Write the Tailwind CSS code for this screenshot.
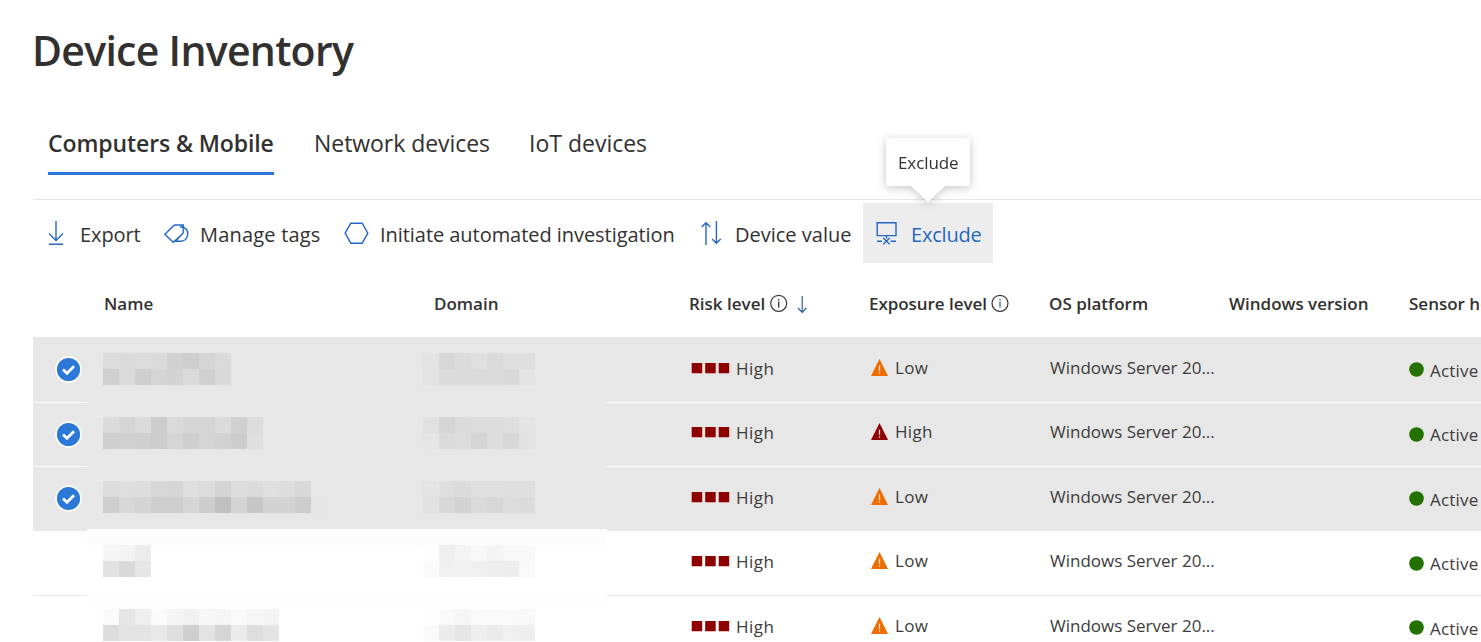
<!DOCTYPE html>
<html lang="en">
<head>
<meta charset="utf-8">
<title>Device Inventory</title>
<script src="https://cdn.jsdelivr.net/npm/@tailwindcss/browser@4"></script>
</head>
<body class="bg-white font-['Open_Sans','Noto_Sans',sans-serif] text-[#323130]">
<div class="relative h-[642px] w-full overflow-hidden whitespace-nowrap pl-[33px]">

  <h1 class="-ml-px pt-5 text-[41px] leading-[60px] font-semibold tracking-[-0.72px]">Device Inventory</h1>

  <nav class="mt-[45px] flex h-[75px] items-start border-b border-[#e6e6e6] pl-[15px] text-[23px] leading-9">
    <a class="w-[226px] border-b-[3px] border-[#2b78d8] pb-[11px] font-semibold tracking-[-0.1px]">Computers &amp; Mobile</a>
    <a class="ml-10 w-[215px] tracking-[-0.05px]">Network devices</a>
    <a>IoT devices</a>
  </nav>

  <div class="mt-[3px] flex h-[60px] items-stretch text-[20px] leading-[64px]">
    <button class="flex w-[130px] pl-3"><svg class="mt-[15px] mr-[9px] h-[30px] w-[26px] shrink-0" viewBox="45 218 26 30" fill="none" stroke="#2567c4" stroke-width="1.4"><path d="M56 221V240.500M49 233.500L56 240.500L63 233.500M49 244.300H63"/></svg><span class="tracking-[-0.1px]">Export</span></button>
    <button class="flex w-[181px]"><svg class="mt-[15px] mr-[10px] h-[30px] w-[27px] shrink-0" viewBox="163 218 27 30" fill="none" stroke="#2567c4" stroke-width="1.400"><path d="M164.800 234.300L174.500 225H183.200V233.200L173.300 242.300ZM180 226.800C186 227 188.300 230.500 187.600 235C187 239 184 241.200 180.500 241.200H175.500L182 234.300"/></svg><span class="tracking-[0.2px]">Manage tags</span></button>
    <button class="flex w-[355px]"><svg class="mt-[15px] mr-[8px] h-[30px] w-[28px] shrink-0" viewBox="344 218 28 30" fill="none" stroke="#2567c4" stroke-width="1.400"><path d="M345.200 233.200L350.800 223.200H362.200L367.800 233.200L362.200 243.200H350.800Z"/></svg><span class="tracking-[-0.05px]">Initiate automated investigation</span></button>
    <button class="flex w-[164px]"><svg class="mt-[15px] mr-[7px] h-[30px] w-[29px] shrink-0" viewBox="699 218 29 30" fill="none" stroke="#2567c4" stroke-width="1.400"><path d="M706 245V222.700M701.700 227L706 222.700L710.300 227M716.400 221V243.200M712.100 239L716.400 243.300L720.700 239"/></svg><span>Device value</span></button>
    <button class="flex w-[130px] bg-[#ededed] pl-3 text-[#2567c4]"><svg class="mt-[15px] mr-[10px] h-[30px] w-[26px] shrink-0" viewBox="875 218 26 30" fill="none" stroke="#2567c4" stroke-width="1.400"><path d="M877.200 222.700H896V235.600H877.200ZM877 241.200H882M890.500 241.200H896M883.200 238L889.700 244.300M889.700 238L883.200 244.300M886.500 235.600V238.500"/></svg><span class="tracking-[-0.2px]">Exclude</span></button>
  </div>

  <div class="flex h-[74px] pl-[71px] pt-[3px] text-[17px] leading-[75px] font-semibold *:shrink-0">
    <div class="w-[330px]">Name</div>
    <div class="w-[255px]">Domain</div>
    <div class="flex w-[180px]"><span class="w-[80px]">Risk level</span>
      <svg class="mt-[27px] h-5 w-[45px]" viewBox="769 293 45 20" fill="none" stroke="#3b3a39" stroke-width="1.200"><circle cx="778.700" cy="303.300" r="8"/><path d="M778.700 301.500V307.500M778.700 299V300.400" stroke-width="1.400"/><path d="M802.200 296V312M798 308L802.200 312.400L806.400 308" stroke="#2d5f9e"/></svg></div>
    <div class="flex w-[180px]"><span class="w-[121px] tracking-[-0.05px]">Exposure level</span>
      <svg class="mt-[27px] h-5 w-5" viewBox="990 293 20 20" fill="none" stroke="#3b3a39" stroke-width="1.200"><circle cx="1000" cy="303.300" r="8"/><path d="M1000 301.500V307.500M1000 299V300.400" stroke="#4b6f9b" stroke-width="1.400"/></svg></div>
    <div class="w-[180px]">OS platform</div>
    <div class="w-[180px]">Windows version</div>
    <div class="w-[180px]">Sensor health</div>
  </div>

  <div id="rows"></div>

  <!-- redacted names and domains -->
  <svg id="mosaic" class="absolute left-0 top-0 h-[642px] w-[620px]" viewBox="0 0 620 642" shape-rendering="crispEdges"></svg>

  <div class="absolute left-[886px] top-[138px] h-[64px] w-[84px] drop-shadow-[0_2px_5px_rgba(0,0,0,0.22)]">
    <div class="h-12 rounded-[3px] bg-white pl-3 text-[17px] leading-[49px] tracking-[-0.1px]">Exclude</div>
    <svg class="ml-[25px] block h-4 w-[34px]" viewBox="0 0 34 16"><path d="M0 0H34L17 16Z" fill="#fff"/></svg>
  </div>
</div>

<template id="row">
  <div class="row flex items-start border-b text-[17px] leading-8 text-[#3d3c3b] *:shrink-0">
    <div class="mark w-[70px] pl-[22px]"><svg class="check mt-[3px] block h-[27px] w-[27px]" viewBox="0 0 27 27"><circle cx="13.500" cy="13.500" r="13.300" fill="#fff"/><circle cx="13.500" cy="13.500" r="11.600" fill="#2b78d8"/><path d="M8 13.500L12 17.300L19 10.300" fill="none" stroke="#fff" stroke-width="2.700"/></svg></div>
    <div class="w-[585px]"></div>
    <div class="flex w-[180px] pl-[3px]"><svg class="mt-[9px] mr-[6px] h-3 w-[39px]" viewBox="691 362 39 12"><path fill="#8e0000" d="M691.700 363H702.200V373.200H691.700ZM705.200 363H715.700V373.200H705.200ZM718.700 363H729.200V373.200H718.700Z"/></svg><span class="tracking-[0.5px]">High</span></div>
    <div class="flex w-[180px] pl-[3px]"><svg class="tri mt-[6px] mr-[7px] h-[17px] w-[17px]" viewBox="0 0 17 17"><path d="M8.500 0L17 17H0Z"/><path d="M8.500 6.500V12M8.500 13.300V14.800" stroke="#fff" stroke-opacity=".8" stroke-width="1.300"/></svg><span class="exp -mt-px tracking-[0.3px]"></span></div>
    <div class="-mt-px w-[361px] pl-[2px]">Windows Server 20...</div>
    <div class="flex"><div class="mark mr-[6px]"><svg class="mt-[9px] block h-[15px] w-[15px]" viewBox="0 0 15 15"><circle cx="7.500" cy="7.500" r="7.300" fill="#257100"/></svg></div><span class="mt-0.5 tracking-[0.2px]">Active</span></div>
  </div>
</template>

<script>
const rows = [
  ['Low',  '#ee6c00', 'h-[66px] pt-4 bg-[#e7e7e7] border-white', true],
  ['High', '#8e0000', 'h-[64px] pt-[14px] bg-[#e7e7e7] border-white', true, 'pt-px'],
  ['Low',  '#ee6c00', 'h-[64px] pt-[15px] bg-[#e7e7e7] border-[#e7e7e7]', true],
  ['Low',  '#ee6c00', 'h-[65px] pt-[15px] border-[#e9e9e9]', false, 'pt-px'],
  ['Low',  '#ee6c00', 'h-[65px] pt-[15px] border-[#e9e9e9]', false]
];
const host = document.getElementById('rows');
for (const [exposure, color, cls, checked, markCls] of rows) {
  const n = document.getElementById('row').content.cloneNode(true);
  n.querySelector('.row').className += ' ' + cls;
  n.querySelector('.exp').textContent = exposure;
  n.querySelector('.tri').setAttribute('fill', color);
  if (markCls) n.querySelectorAll('.mark').forEach(m => m.classList.add(markCls));
  if (!checked) n.querySelector('.check').remove();
  host.append(n);
}

const svg = document.getElementById('mosaic');
function block(x, y, w, h, fill) {
  const r = document.createElementNS('http://www.w3.org/2000/svg', 'rect');
  for (const [k, v] of Object.entries({x, y, width: w, height: h, fill})) r.setAttribute(k, v);
  svg.append(r);
}
block(87, 401, 520, 16, '#e9e9e9');
block(87, 465, 520, 16, '#e9e9e9');
block(87, 529, 520, 16, '#fcfcfc');
block(87, 593, 520, 16, '#fefefe');
const cells = [
  [103, 353, 'dcdcdc dadada dcdcdc dadada d1d1d1 cecece d5d5d5 dadada'],
  [103, 369, 'd0d0d0 dadada cecece d5d5d5 d3d3d3 dadada d0d0d0 d9d9d9'],
  [103, 417, 'dbdbdb d5d5d5 dbdbdb cccccc dadada d5d5d5 d5d5d5 dbdbdb d0d0d0 dcdcdc'],
  [103, 433, 'cfcfcf d1d1d1 cfcfcf cccccc d5d5d5 cfcfcf d5d5d5 d2d2d2 cccccc dfdfdf'],
  [103, 481, 'dcdcdc dedede dddddd d7d7d5 d5d5d5 dfdfdf dcdcdc d4d4d4 dddddd dbdbdb e0e0e0 dddddd d8d8d8'],
  [103, 497, 'cecece d8d8d8 d4d4d4 cececd cecece d6d6d6 cdcdcb c0c0c0 d4d4d4 c6c6c6 d3d3d3 d3d3d3 cdcdcd e5e5e5'],
  [103, 545, 'f5f5f5 f3f3f3 ececec'],
  [103, 561, 'e2e2e0 d9d9d9 e6e6e6'],
  [103, 609, 'fafafa e5e5e5 efefef fbfbfb f5f5f5 f0f0f0 f7f7f7 f5f5f5 fafafa f6f6f6 f4f4f4'],
  [103, 625, 'dddddd e3e3e3 e3e3e3 e9e9e9 dedede cfcfcf e3e3e3 d5d5d5 ebebeb dedede e4e4e4'],
  [423, 353, 'e4e4e4 d7d7d7 dbdbdb e0e0de dadada dfdfdd dfdfdf'],
  [423, 369, 'e3e3e3 dbdbdb dbdbdb dbdbdb dbdbdb d9d9d9 e3e3e1'],
  [423, 417, 'e1e1e1 d5d5d5 dadad8 dcdcdc dcdcdc dedede e3e3e3'],
  [423, 433, 'e5e5e5 dadada dcdcdc d5d5d5 dddddd d7d7d7 e2e2e2'],
  [423, 481, 'e4e4e4 dedede dbdbdb e0e0e0 e0e0e0 dfdfdf dfdfdd'],
  [423, 497, 'e2e2e2 d8d8d8 d2d2d2 dadada d7d7d7 dcdcdc dbdbdb'],
  [423, 545, 'fdfdfd efefef f3f3f3 f8f8f8 f4f4f4 f8f8f8 f8f8f8'],
  [423, 561, 'fafafa f0f0f0 f2f2f2 f0f0f0 eeeeee ededed f9f9f9'],
  [423, 609, 'fefefe f9f9f9 f6f6f6 f9f9f9 fafafa f9f9f9 f8f8f8'],
  [423, 625, 'f9f9f9 ebebeb e5e5e3 eeeeee eaeaea f0f0f0 eeeeee']
];
for (const [x, y, colors] of cells) colors.split(' ').forEach((c, i) => block(x + i * 16, y, 16, 16, '#' + c));
</script>
</body>
</html>
